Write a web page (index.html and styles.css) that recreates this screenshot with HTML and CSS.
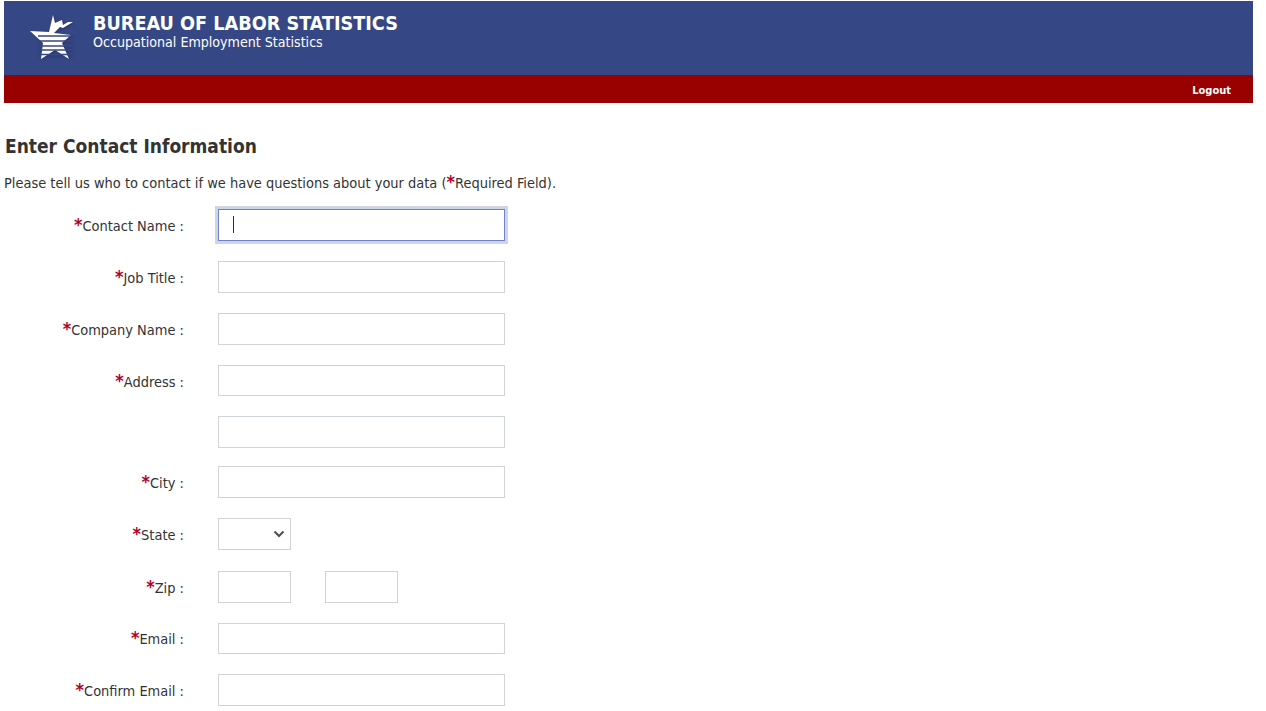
FILE: index.html
```html
<!DOCTYPE html>
<html lang="en">
<head>
<meta charset="utf-8">
<title>Occupational Employment Statistics</title>
<link rel="stylesheet" href="styles.css">
</head>
<body>
<div class="page">
  <header class="banner">
    <svg class="logo" width="44" height="46" viewBox="0 0 44 46" aria-hidden="true">
      <polygon class="logo-star" points="0,16 19,17 23,0 25,8 32,5 33,10 38,7 43,7 33,13 30,12 24,18 41,20 32,28 39,44 25,35 11,44 13,28"/>
      <path class="logo-stripes" d="M8 21H42M8 26H42M8 31H42M8 35H42M8 39.500H42"/>
    </svg>
    <div class="brand">
      <div class="brand-title">BUREAU OF LABOR STATISTICS</div>
      <div class="brand-sub">Occupational Employment Statistics</div>
    </div>
  </header>
  <nav class="subnav"><a class="logout" href="#">Logout</a></nav>
  <main>
    <h1 class="title">Enter Contact Information</h1>
    <p class="intro">Please tell us who to contact if we have questions about your data (<span class="req">*</span>Required Field).</p>
    <form class="form">
      <div class="row"><label class="label"><span class="req">*</span>Contact Name :</label><div class="field is-focus"><input class="input" type="text"><span class="caret"></span></div></div>
      <div class="row"><label class="label"><span class="req">*</span>Job Title :</label><input class="input" type="text"></div>
      <div class="row"><label class="label"><span class="req">*</span>Company Name :</label><input class="input" type="text"></div>
      <div class="row"><label class="label"><span class="req">*</span>Address :</label><input class="input input-compact" type="text"></div>
      <div class="row row-tight"><span class="label"></span><input class="input" type="text"></div>
      <div class="row row-tighter"><label class="label"><span class="req">*</span>City :</label><input class="input" type="text"></div>
      <div class="row"><label class="label"><span class="req">*</span>State :</label><div class="field"><select class="input input-short select"><option></option></select><svg class="chevron" width="12" height="8" viewBox="0 0 12 8" aria-hidden="true"><path d="M1.500 1.500L6 6L10.500 1.500"/></svg></div></div>
      <div class="row row-loose"><label class="label"><span class="req">*</span>Zip :</label><div class="zip"><input class="input input-short" type="text"><input class="input input-short" type="text"></div></div>
      <div class="row"><label class="label label-raised"><span class="req">*</span>Email :</label><input class="input input-compact" type="text"></div>
      <div class="row row-tight"><label class="label"><span class="req">*</span>Confirm Email :</label><input class="input" type="text"></div>
    </form>
  </main>
</div>
</body>
</html>
```
FILE: styles.css
```css
* { box-sizing: border-box; }
html, body { margin: 0; padding: 0; height: 711px; overflow: hidden; background: #fff; }
body { font-family: "DejaVu Sans", Verdana, sans-serif; font-stretch: condensed; color: #333; }
.page { padding: 1px 13px 0 4px; }
.banner { height: 74px; background: #364785; display: flex; align-items: flex-start; color: #fff; }
.logo { margin: 14px 0 0 26px; flex: none; filter: drop-shadow(1px 1px 1px rgba(20, 25, 50, .4)); }
.logo-star { fill: #fff; }
.logo-stripes { fill: none; stroke: #364785; stroke-width: 1.5; }
.brand { margin: 11px 0 0 19px; }
.brand-title { font-size: 19.650px; font-weight: 700; line-height: 23px; }
.brand-sub { font-size: 14.100px; line-height: 17px; margin-top: -1px; }
.subnav { height: 28px; background: #990000; display: flex; justify-content: flex-end; align-items: center; padding: 2px 22px 0 0; }
.logout { color: #fff; font-size: 11px; font-weight: 700; text-decoration: none; }
.title { margin: 31px 0 0 1px; font-size: 19px; line-height: 24px; font-weight: 700; color: #333; }
.intro { margin: 15px 0 0; font-size: 14.460px; line-height: 20px; }
.req { color: #b0002a; font-size: 18px; font-weight: 700; line-height: 14px; }
.form { margin-top: 16px; display: flex; flex-direction: column; gap: 20px; }
.row { display: flex; align-items: center; gap: 34px; height: 32px; }
.row-tight { margin-top: -1px; }
.row-tighter { margin-top: -2px; }
.row-loose { margin-top: 1px; }
.label { width: 180px; flex: none; text-align: right; font-size: 14.460px; line-height: 20px; padding-top: 1px; }
.label-raised { padding-top: 0; padding-bottom: 1px; }
.field { position: relative; }
.input { display: block; width: 287px; height: 32px; border: 1px solid #ced4da; border-radius: 0; background: #fff; padding: 0 12px; font: inherit; color: #495057; outline: none; }
.input-compact { height: 31px; align-self: flex-start; }
.input-short { width: 73px; }
.zip { display: flex; gap: 34px; }
.select { padding: 0 4px; appearance: none; }
.chevron { position: absolute; right: 6px; top: 12px; }
.chevron path { fill: none; stroke: #495057; stroke-width: 2; }
.is-focus .input { border-color: #6f82c9; box-shadow: 0 0 0 3px #cfd5e6; }
.caret { position: absolute; left: 15px; top: 7px; width: 1px; height: 17px; background: #333; }
```
